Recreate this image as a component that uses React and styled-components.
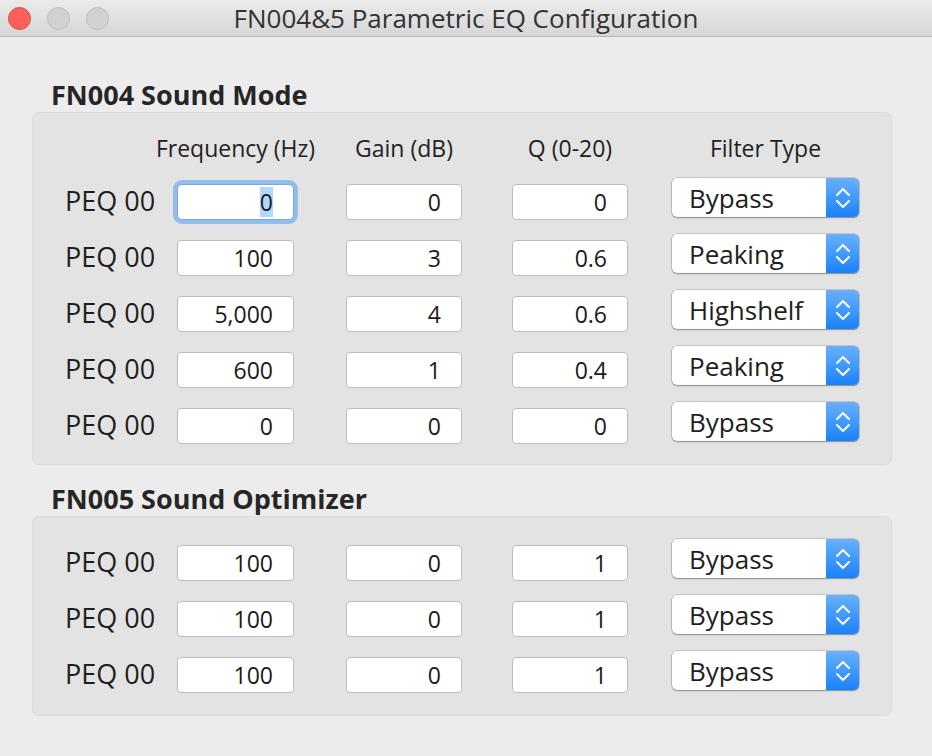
import styled, { createGlobalStyle } from "styled-components";

const GlobalStyle = createGlobalStyle`
  html, body {
    margin: 0;
    padding: 0;
    background: #ececec;
  }
  body {
    font-family: "Open Sans", "Liberation Sans", sans-serif;
    color: #222;
  }
`;

const Window = styled.div`
  width: 932px;
  height: 756px;
  display: flex;
  flex-direction: column;
  background: #ececec;
  overflow: hidden;
`;

const TitleBar = styled.div`
  height: 36px;
  display: grid;
  grid-template-columns: 1fr auto 1fr;
  align-items: center;
  background: linear-gradient(#ebebeb, #d6d6d6);
  border-bottom: 1px solid #b9b9b9;
`;

const Lights = styled.div`
  display: flex;
  gap: 16px;
  padding-left: 8px;
  align-items: center;
`;

const Light = styled.span`
  width: 23px;
  height: 23px;
  border-radius: 50%;
  box-sizing: border-box;
  background: ${(p) => (p.$red ? "#fc605b" : "#d1d1d1")};
  border: 1px solid ${(p) => (p.$red ? "#de4a45" : "#bdbdbd")};
`;

const WindowTitle = styled.div`
  font-size: 26px;
  line-height: 30px;
  color: #333;
  white-space: nowrap;
`;

const Body = styled.div`
  padding: 44px 40px 0 32px;
`;

const SectionTitle = styled.div`
  margin: ${(p) => (p.$first ? "0" : "20px")} 0 3px 19px;
  font-size: 27px;
  font-weight: 700;
  line-height: 28px;
  color: #262626;
  white-space: nowrap;
`;

const Group = styled.div`
  background: #e3e3e3;
  border: 1px solid #dadada;
  border-radius: 7px;
  padding: ${(p) => p.$pad};
  display: flex;
  flex-direction: column;
  gap: 20px;
`;

const Row = styled.div`
  display: grid;
  grid-template-columns: 112px 169px 166px 160px 187px;
  align-items: center;
  height: ${(p) => (p.$header ? "24px" : "36px")};
  margin-bottom: ${(p) => (p.$header ? "4px" : "0")};
`;

const Label = styled.div`
  font-size: 27px;
  line-height: 30px;
  color: #1e1e1e;
  white-space: nowrap;
  margin-top: -3px;
`;

const Header = styled.div`
  width: ${(p) => p.$w}px;
  display: flex;
  justify-content: center;
  font-size: 23px;
  line-height: 24px;
  color: #222;
  white-space: nowrap;
`;

const Field = styled.div`
  box-sizing: border-box;
  width: ${(p) => p.$w}px;
  height: 36px;
  background: #fff;
  border: 1px solid ${(p) => (p.$focus ? "#7aa9e0" : "#bcbcbc")};
  border-radius: ${(p) => (p.$focus ? "5px" : "4px")};
  box-shadow: ${(p) => (p.$focus ? "0 0 0 4px #93bdee" : "none")};
  display: flex;
  align-items: center;
  justify-content: flex-end;
  padding-right: 20px;
  font-size: 23px;
  line-height: 28px;
  color: #1a1a1a;
`;

const Selected = styled.span`
  background: #b2d6fc;
  padding: 1px 0;
`;

const Select = styled.div`
  box-sizing: border-box;
  width: 187px;
  height: 39px;
  margin: -6px 0 3px;
  background: #fff;
  border-radius: 5px;
  box-shadow: 0 0 0 0.5px rgba(0, 0, 0, 0.25), 0 1px 1.5px rgba(0, 0, 0, 0.3);
  display: flex;
  overflow: hidden;
`;

const SelectText = styled.div`
  flex: 1;
  display: flex;
  align-items: center;
  padding-left: 17px;
  font-size: 26px;
  line-height: 30px;
  color: #1e1e1e;
  white-space: nowrap;
`;

const Stepper = styled.div`
  width: 33px;
  background: linear-gradient(#69b1fa, #1a82fb);
  display: flex;
  align-items: center;
  justify-content: center;
`;

function Chevrons() {
  return (
    <svg width="16" height="24" viewBox="0 0 16 24">
      <polyline
        points="2,9 8,3 14,9"
        fill="none"
        stroke="#fff"
        strokeWidth="2"
        strokeLinecap="round"
        strokeLinejoin="round"
      />
      <polyline
        points="2,15 8,21 14,15"
        fill="none"
        stroke="#fff"
        strokeWidth="2"
        strokeLinecap="round"
        strokeLinejoin="round"
      />
    </svg>
  );
}

const soundMode = [
  ["0", "0", "0", "Bypass"],
  ["100", "3", "0.6", "Peaking"],
  ["5,000", "4", "0.6", "Highshelf"],
  ["600", "1", "0.4", "Peaking"],
  ["0", "0", "0", "Bypass"],
];

const optimizer = [
  ["100", "0", "1", "Bypass"],
  ["100", "0", "1", "Bypass"],
  ["100", "0", "1", "Bypass"],
];

function PeqRow({ values, focusFirst }) {
  const [freq, gain, q, type] = values;
  return (
    <Row>
      <Label>PEQ 00</Label>
      <Field $w={117} $focus={focusFirst}>
        {focusFirst ? <Selected>{freq}</Selected> : freq}
      </Field>
      <Field $w={116}>{gain}</Field>
      <Field $w={116}>{q}</Field>
      <Select>
        <SelectText>{type}</SelectText>
        <Stepper>
          <Chevrons />
        </Stepper>
      </Select>
    </Row>
  );
}

export default function App() {
  return (
    <Window>
      <GlobalStyle />
      <TitleBar>
        <Lights>
          <Light $red />
          <Light />
          <Light />
        </Lights>
        <WindowTitle>FN004&amp;5 Parametric EQ Configuration</WindowTitle>
        <div />
      </TitleBar>
      <Body>
        <SectionTitle $first>FN004 Sound Mode</SectionTitle>
        <Group $pad="23px 0 20px 32px">
          <Row $header>
            <div />
            <Header $w={117}>Frequency (Hz)</Header>
            <Header $w={116}>Gain (dB)</Header>
            <Header $w={116}>Q (0-20)</Header>
            <Header $w={187}>Filter Type</Header>
          </Row>
          {soundMode.map((v, i) => (
            <PeqRow key={i} values={v} focusFirst={i === 0} />
          ))}
        </Group>
        <SectionTitle>FN005 Sound Optimizer</SectionTitle>
        <Group $pad="28px 0 22px 32px">
          {optimizer.map((v, i) => (
            <PeqRow key={i} values={v} />
          ))}
        </Group>
      </Body>
    </Window>
  );
}
